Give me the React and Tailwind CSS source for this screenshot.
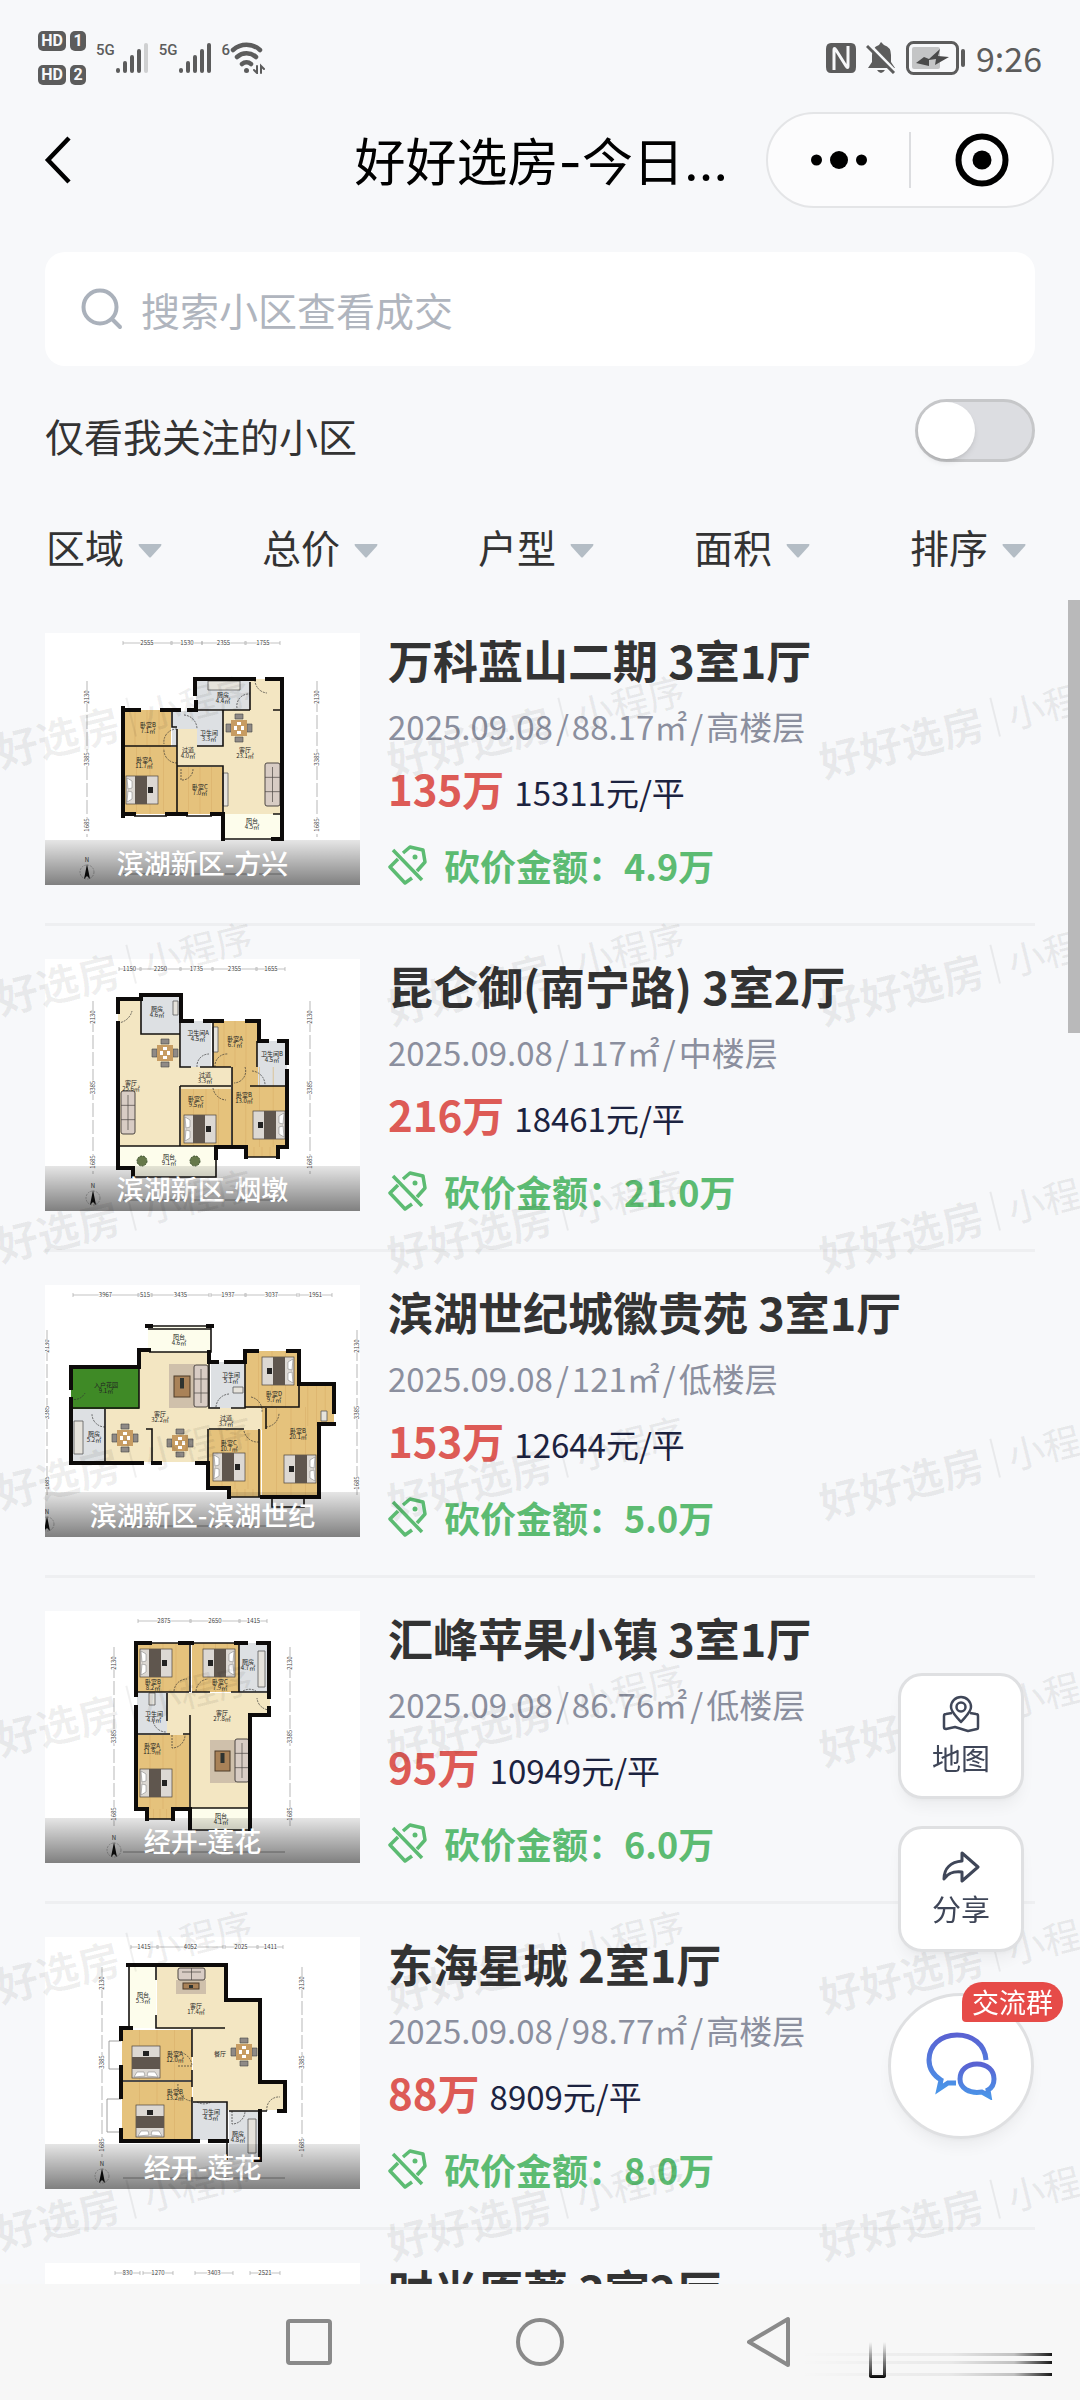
import { useState } from 'react';

const filters = ['区域', '总价', '户型', '面积', '排序'];

// x, y, w, h, floor
const plans = {
  fangxing: {
    rooms: [
      [151, 46, 54, 31, 'tile'], [205, 46, 32, 32, 'hall'], [178, 77, 59, 104, 'hall'],
      [127, 78, 51, 35, 'tile'], [132, 96, 20, 38, 'hall'], [132, 113, 46, 21, 'hall'],
      [78, 77, 48, 37, 'wood'], [78, 114, 54, 67, 'wood'], [132, 134, 46, 47, 'wood'], [177, 181, 60, 25, 'sun'],
    ],
    walls: 'M150 61V46H209 M222 46H237V206H228 M151 69V77H144 M78 77H94 M117 77H134 M78 75V183 M78 181H89 M122 181H141 M167 181H178V206',
    thin: 'M205 49V77 M127 77V94H132 M178 77V113H152 M78 113H132 M132 96V181 M132 133H178V181 M151 77H205 M228 77H237 M228 181H237 M178 206H237 M89 183H122 M141 183H167',
    doors: 'M210 47a13 13 0 0 0 12 13 M139 82a14 14 0 0 1 13 14 M132 96a13 13 0 0 0-13 15 M132 130a13 13 0 0 1-13-14 M136 136v11a11 11 0 0 0 12-11 M192 75a12 12 0 0 1 13-14',
    beds: [[81, 143, 0]],
    tables: [[194, 95]],
    sofas: [[220, 130, 15, 43]],
    extras: 'M178 140h5v33h-5z M163 48h32v9h-32z',
    labels: [[178, 64, '厨房', '4.4㎡'], [103, 94, '卧室B', '7.1㎡'], [99, 129, '卧室A', '11.7㎡'], [164, 102, '卫生间', '3.3㎡'], [143, 119, '过道', '4.0㎡'], [200, 119, '客厅', '23.1㎡'], [155, 156, '卧室C', '7.0㎡'], [207, 190, '阳台', '4.5㎡']],
    top: [[78, 126, '2555'], [127, 157, '1530'], [157, 200, '2355'], [201, 235, '1755']],
    left: 42, right: 272, from: 48, to: 204,
  },
  yandun: {
    rooms: [
      [73, 40, 62, 147, 'hall'], [96, 37, 39, 38, 'tile'], [136, 62, 30, 46, 'tile'], [168, 62, 44, 46, 'wood'],
      [135, 108, 51, 22, 'hall'], [136, 130, 50, 57, 'wood'], [187, 108, 55, 80, 'wood'], [201, 188, 32, 10, 'wood'],
      [213, 82, 29, 45, 'tile'], [73, 187, 98, 22, 'sun'], [88, 209, 83, 8, 'sun'],
    ],
    walls: 'M73 53V40H96V36H136V62H147 M73 64V209H88V217 M160 62H177 M202 62H214V82H222 M234 82H242V104 M242 112V188H233V198 M171 199V188H201V198',
    thin: 'M96 37V75H135 M135 62V108H146 M155 108H186 M168 62V108 M212 82V108 M205 127H242 M135 127H186 M135 127V187 M187 108V187 M88 218H171V188 M73 187H171 M201 198H233',
    doors: 'M73 64a16 16 0 0 0 14-12 M152 108a12 12 0 0 1 12-13 M170 108a12 12 0 0 1 13-13 M168 129a14 14 0 0 0 13 12 M207 112a14 14 0 0 1 13 14 M200 108a12 12 0 0 1-11 16',
    beds: [[139, 156, 0], [208, 152, 180]],
    tables: [[120, 94]],
    sofas: [[76, 132, 14, 43]],
    extras: 'M168 68h5v25h-5z M128 42h5v14h-5z',
    plants: [[97, 202], [150, 202]],
    labels: [[112, 52, '厨房', '4.6㎡'], [153, 76, '卫生间A', '4.5㎡'], [190, 82, '卧室A', '6.7㎡'], [227, 97, '卫生间B', '4.5㎡'], [160, 118, '过道', '3.3㎡'], [86, 126, '客厅', '25.6㎡'], [151, 142, '卧室C', '9.5㎡'], [199, 138, '卧室B', '13.0㎡'], [124, 200, '阳台', '9.1㎡']],
    top: [[74, 95, '1150'], [96, 135, '2250'], [136, 167, '1735'], [168, 211, '2355'], [212, 240, '1655']],
    left: 48, right: 265, from: 42, to: 215,
  },
  shiji: {
    rooms: [
      [103, 41, 63, 26, 'sun'], [26, 82, 68, 42, 'grass'], [26, 124, 34, 53, 'tile'], [94, 67, 70, 58, 'hall'],
      [61, 124, 103, 53, 'hall'], [166, 77, 34, 47, 'tile'], [200, 66, 54, 57, 'wood'], [164, 123, 57, 22, 'hall'],
      [164, 145, 52, 59, 'wood'], [184, 204, 32, 8, 'wood'], [217, 122, 58, 90, 'wood'], [254, 99, 35, 42, 'wood'], [227, 212, 32, 10, 'plain'],
    ],
    walls: 'M102 41h4 M163 41h4 M26 103V82H94V65H104 M26 114V178H97 M108 178H115 M152 178H163V203H184V212 M164 67V77H172 M181 77H200V66H212 M243 66H254V99H289V127 M289 139H274V212H217',
    thin: 'M103 41H166V67H104 M103 44H166 M94 67V123H26 M60 124V177 M101 144H107V177 M164 67V123H175 M186 123H200V77 M200 122H254V99 M221 123V144 M164 144H199 M214 144V212 M163 144V177 M184 212H216 M227 212V222H259V212',
    doors: 'M26 114a12 12 0 0 0 14-6 M60 142a13 13 0 0 1-13-13 M171 122a14 14 0 0 1 13-13 M206 112a14 14 0 0 1 11 15 M199 146a14 14 0 0 0 15 11 M221 142a14 14 0 0 0 13-14',
    beds: [[217, 72, 180], [168, 168, 0], [239, 170, 180]],
    tables: [[80, 153], [135, 158]],
    sofas: [[149, 80, 14, 42]],
    rugs: [[124, 79, 26, 44, 129, 91, 16, 21]],
    extras: 'M29 136h9v33h-9z M188 102h10v6h-10z M276 126h6v10h-6z',
    labels: [[134, 54, '阳台', '4.6㎡'], [61, 102, '入户花园', '9.1㎡'], [186, 92, '卫生间', '5.1㎡'], [229, 111, '卧室D', '9.7㎡'], [115, 131, '客厅', '32.2㎡'], [181, 135, '过道', '3.7㎡'], [49, 151, '厨房', '5.2㎡'], [253, 148, '卧室B', '20.1㎡'], [184, 160, '卧室C', '10.7㎡']],
    top: [[28, 93, '3967'], [94, 106, '515'], [107, 164, '3435'], [166, 200, '1937'], [201, 252, '3037'], [254, 287, '1951']],
    left: 2, right: 312, from: 45, to: 210,
  },
  lianhuaA: {
    rooms: [
      [92, 32, 52, 49, 'wood'], [147, 32, 47, 49, 'wood'], [195, 32, 29, 49, 'tile'], [122, 82, 83, 115, 'hall'],
      [205, 82, 20, 22, 'hall'], [92, 82, 30, 42, 'tile'], [92, 124, 52, 74, 'wood'], [102, 198, 26, 10, 'wood'], [147, 197, 58, 22, 'sun'],
    ],
    walls: 'M105 32H91V84 M91 96V198H102V208 M135 32H147 M191 32H201 M213 32H224V86 M224 97V104H205V219 M128 208V198H145V219',
    thin: 'M145 32V81 M194 32V81 M92 81H144 M147 81H165 M186 81H224 M122 82V110 M92 123H125 M138 123H145 M145 104V198 M145 197H205 M147 219H205 M102 208H128 M105 32H135 M147 32H191',
    doors: 'M129 80a13 13 0 0 1 13-12 M151 80a13 13 0 0 1 12-12 M198 80a13 13 0 0 1 13 0 M225 99a13 13 0 0 1-13-12 M108 108a13 13 0 0 0 13 13 M127 124v13a13 13 0 0 0 13-13',
    beds: [[95, 38, 0], [158, 38, 180], [95, 158, 0]],
    tables: [],
    sofas: [[190, 128, 14, 43]],
    rugs: [[165, 129, 26, 43, 170, 140, 15, 20]],
    extras: 'M213 40h7v36h-7z M104 82h6v12h-6z',
    labels: [[108, 73, '卧室B', '8.2㎡'], [175, 73, '卧室C', '7.9㎡'], [203, 53, '厨房', '4.7㎡'], [109, 105, '卫生间', '4.0㎡'], [177, 104, '客厅', '27.8㎡'], [107, 137, '卧室A', '11.9㎡'], [176, 207, '阳台', '4.1㎡']],
    top: [[93, 145, '2875'], [146, 194, '2650'], [195, 222, '1415']],
    left: 69, right: 245, from: 36, to: 215,
  },
  lianhuaB: {
    rooms: [
      [84, 30, 27, 61, 'sun'], [112, 28, 69, 64, 'hall'], [148, 63, 67, 110, 'hall'], [215, 145, 25, 28, 'hall'],
      [77, 93, 70, 50, 'wood'], [77, 145, 70, 58, 'wood'], [148, 165, 34, 38, 'tile'], [184, 174, 31, 49, 'tile'],
    ],
    walls: 'M83 28H181V63H215V145H240V174H234 M86 91H76V102 M76 130V160 M76 193V204H153 M165 204H182 M215 174V223H208',
    thin: 'M84 30V91 M111 30V43 M111 78V91H180 M147 92V120 M147 133V150 M77 144H147 M147 160V203 M148 165H182V203 M184 174H222 M182 203V223',
    lines: 'M76 104H64V132H76 M76 162H62V195H76',
    doors: 'M133 129h14a15 15 0 0 0-13-14 M133 147a15 15 0 0 0 14 17 M152 165a14 14 0 0 0 14 0 M187 174v13a13 13 0 0 0 13-13 M222 174a12 12 0 0 1 13-14',
    beds: [[85, 111, 270], [89, 170, 270]],
    tables: [[199, 115]],
    sofas: [[133, 31, 27, 12]],
    rugs: [[131, 43, 30, 14, 138, 46, 16, 6]],
    extras: 'M203 182h8v34h-8z',
    labels: [[98, 60, '阳台', '5.3㎡'], [151, 71, '客厅', '17.4㎡'], [175, 119, '餐厅', ''], [130, 119, '卧室A', '12.0㎡'], [130, 157, '卧室B', '13.2㎡'], [166, 177, '卫生间', '4.5㎡'], [193, 199, '厨房', '4.8㎡']],
    top: [[86, 112, '1415'], [113, 178, '4052'], [180, 212, '2025'], [213, 238, '1411']],
    left: 57, right: 257, from: 30, to: 220,
  },
  empty: {
    rooms: [], walls: '', thin: '', doors: '', beds: [], tables: [], sofas: [], extras: '', labels: [],
    top: [[70, 95, '830'], [98, 128, '1270'], [150, 188, '3403'], [205, 235, '2521']],
    left: 60, right: 250, from: 36, to: 215,
  },
};

const floors = { tile: '#dde0e3', hall: '#f3e6c2', wood: '#e5c27c', sun: '#fdfdec', grass: '#3f8a26', plain: '#ffffff' };

const listings = [
  { name: '万科蓝山二期', layout: '3室1厅', size: '88.17', floor: '高楼层', price: '135', unit: '15311', cut: '4.9', area: '滨湖新区-方兴', plan: 'fangxing' },
  { name: '昆仑御(南宁路)', layout: '3室2厅', size: '117', floor: '中楼层', price: '216', unit: '18461', cut: '21.0', area: '滨湖新区-烟墩', plan: 'yandun' },
  { name: '滨湖世纪城徽贵苑', layout: '3室1厅', size: '121', floor: '低楼层', price: '153', unit: '12644', cut: '5.0', area: '滨湖新区-滨湖世纪', plan: 'shiji' },
  { name: '汇峰苹果小镇', layout: '3室1厅', size: '86.76', floor: '低楼层', price: '95', unit: '10949', cut: '6.0', area: '经开-莲花', plan: 'lianhuaA' },
  { name: '东海星城', layout: '2室1厅', size: '98.77', floor: '高楼层', price: '88', unit: '8909', cut: '8.0', area: '经开-莲花', plan: 'lianhuaB' },
  { name: '时光原著', layout: '3室2厅', size: '95.2', floor: '中楼层', price: '120', unit: '12605', cut: '5.0', area: '经开-莲花', plan: 'empty' },
];

function Bed({ x, y, turn }) {
  return (
    <g transform={`translate(${x} ${y}) rotate(${turn} 16 14)`}>
      <rect width="32" height="28" fill="#dcd8d3" stroke="#4b443d" strokeWidth="0.7" />
      <path d="M1 2l5 3v7l-4 1zM1 26l5-3v-7l-4-1z" fill="#fff" stroke="#777" strokeWidth="0.5" />
      <rect x="9" width="12" height="28" fill="#5f564e" />
      <rect x="22" y="11" width="5" height="6" fill="#222" />
    </g>
  );
}

function Table({ x, y }) {
  return (
    <g transform={`translate(${x} ${y})`}>
      <path d="M-4-14h8v5h-8zM-4 9h8v5h-8zM-13-4h5v8h-5zM8-4h5v8h-5z" fill="#8f8a86" stroke="#444" strokeWidth="0.6" />
      <rect x="-8" y="-8" width="16" height="16" fill="#c79c62" />
      <path d="M-5-2h3v4h-3zM2-2h3v4H2zM-2-6h4v3h-4zM-2 3h4v3h-4z" fill="#fff" />
    </g>
  );
}

function Dim({ x, y, turn, text }) {
  return <text x={x} y={y} transform={turn ? `rotate(-90 ${x} ${y})` : undefined} textAnchor="middle" fontSize="6" fill="#444" stroke="#fff" strokeWidth="1.5" paintOrder="stroke">{text}</text>;
}

function FloorPlan({ plan }) {
  const mid = (plan.from + plan.to) / 2;
  return (
    <svg viewBox="0 0 315 252" className="block w-full h-full" aria-hidden="true">
      {plan.rooms.map(([x, y, w, h, kind], i) => (
        <rect key={i} x={x} y={y} width={w} height={h} fill={floors[kind]} />
      ))}
      {plan.rooms.filter(r => r[4] === 'wood').map(([x, y, w, h], i) => (
        <path key={i} d={`M${x + w * 0.25} ${y}v${h}M${x + w * 0.5} ${y}v${h}M${x + w * 0.75} ${y}v${h}`} stroke="#d8b06a" strokeWidth="0.6" />
      ))}
      {plan.rugs?.map(([x, y, w, h, tx, ty, tw, th], i) => (
        <g key={i}>
          <rect x={x} y={y} width={w} height={h} fill="#cfc0ab" />
          <rect x={tx} y={ty} width={tw} height={th} fill="#a98258" stroke="#4d3a28" strokeWidth="1" />
          <rect x={tx + tw / 2 - 2} y={ty + 2} width="4" height={th / 2} fill="#2e3330" />
        </g>
      ))}
      {plan.sofas.map(([x, y, w, h], i) => (
        <g key={i} stroke="#4c4643" strokeWidth="1">
          <rect x={x} y={y} width={w} height={h} rx="2" fill="#d8ccc4" />
          <path d={w > h ? `M${x + 4} ${y + 4}h${w - 8}M${x + w / 2} ${y}v${h}` : `M${x + w / 2} ${y + 4}v${h - 8}M${x} ${y + h / 3}h${w}M${x} ${y + (h * 2) / 3}h${w}`} fill="none" strokeWidth="0.7" />
        </g>
      ))}
      <path d={plan.extras} fill="#e6e3dc" stroke="#5a5a5a" strokeWidth="0.8" />
      {plan.beds.map(([x, y, turn], i) => <Bed key={i} x={x} y={y} turn={turn} />)}
      {plan.tables.map(([x, y], i) => <Table key={i} x={x} y={y} />)}
      {plan.plants?.map(([x, y], i) => <circle key={i} cx={x} cy={y} r="5" fill="#66784a" stroke="#3e5230" strokeDasharray="2 1" />)}
      <path d={plan.doors} fill="none" stroke="#333" strokeWidth="0.7" strokeDasharray="2 1" />
      <path d={plan.lines} fill="none" stroke="#888" strokeWidth="0.8" />
      <path d={plan.thin} fill="none" stroke="#15120f" strokeWidth="1.6" />
      <path d={plan.walls} fill="none" stroke="#0d0b0a" strokeWidth="4" strokeLinecap="square" />
      {plan.labels.map(([x, y, name, size], i) => (
        <text key={i} x={x} y={y} textAnchor="middle" fontSize="6" fill="#222">
          {name}
          <tspan x={x} dy="6">{size}</tspan>
        </text>
      ))}
      {plan.top.map(([a, b, text]) => (
        <g key={a}>
          <path d={`M${a} 10H${b}M${a} 8v4M${b} 8v4`} stroke="#aaa" strokeWidth="0.7" />
          <Dim x={(a + b) / 2} y={12} text={text} />
        </g>
      ))}
      {[plan.left, plan.right].map(x => (
        <g key={x}>
          <path d={`M${x} ${plan.from}V${plan.to}`} stroke="#999" strokeWidth="0.7" strokeDasharray="14 3" />
          <Dim x={x + 2} y={plan.from + 16} turn text="2130" />
          <Dim x={x + 2} y={mid} turn text="3385" />
          <Dim x={x + 2} y={plan.to - 12} turn text="1685" />
        </g>
      ))}
      <path d="M78 241H240" stroke="#777" strokeWidth="0.7" strokeDasharray="30 4" />
      <circle cx={plan.left} cy="239" r="7" fill="none" stroke="#999" strokeWidth="0.6" strokeDasharray="2 1" />
      <path d={`M${plan.left} 231l3 15-3-3-3 3z`} fill="#111" />
      <text x={plan.left} y="229" textAnchor="middle" fontSize="6" fill="#333">N</text>
    </svg>
  );
}

function HdBadge({ n }) {
  return (
    <div className="flex gap-1 font-['Roboto',sans-serif] text-base leading-5 font-bold text-[#f7f8fa]">
      <span className="w-7 rounded-[5px] bg-[#5c5c5c] text-center">HD</span>
      <span className="w-4 rounded-[5px] bg-[#5c5c5c] text-center">{n}</span>
    </div>
  );
}

function Signal({ weak }) {
  return (
    <div className="flex">
      <span className="font-['Roboto',sans-serif] text-[15px] leading-4 font-medium">5G</span>
      <svg width="34" height="32" viewBox="0 0 34 32" stroke="currentColor" strokeWidth="4" strokeLinecap="round">
        <path d="M3 28v1M10 21v8M17 15v14M24 9v20" />
        <path d="M31 3v26" opacity={weak ? 0.25 : 1} />
      </svg>
    </div>
  );
}

function StatusBar() {
  return (
    <div className="flex h-28 items-center justify-between px-[38px] pt-1 text-[#5c5c5c]">
      <div className="flex items-center gap-2.5">
        <div className="flex flex-col gap-3.5">
          <HdBadge n="1" />
          <HdBadge n="2" />
        </div>
        <Signal weak />
        <Signal />
        <div className="flex">
          <span className="font-['Roboto',sans-serif] text-[15px] leading-4 font-medium">6</span>
          <svg width="36" height="32" viewBox="0 0 36 32" fill="none" stroke="currentColor" strokeWidth="4.500" strokeLinecap="round">
            <path d="M3 8a20 20 0 0 1 27 0M7 15a14 14 0 0 1 19 0M12 22a7 7 0 0 1 9 0" />
            <circle cx="16.500" cy="28.500" r="2.500" fill="currentColor" stroke="none" />
            <path d="M27 24v7l-3-3M31 31v-7l3 3" strokeWidth="2" />
          </svg>
        </div>
      </div>
      <div className="flex items-center gap-2.5">
        <svg width="30" height="32" viewBox="0 0 30 32">
          <path d="M5 1h20q5 0 5 6v18q0 6-5 6H5q-5 0-5-6V7q0-6 5-6z" fill="currentColor" />
          <path d="M8 28V8q0-3 2 0l10 16q2 3 2 0V4" fill="none" stroke="#f7f8fa" strokeWidth="3" />
        </svg>
        <svg width="30" height="32" viewBox="0 0 30 32">
          <path d="M15 0l3 3q7 2 7 10v7l4 6H2l4-6v-7q0-8 7-10z" fill="currentColor" />
          <path d="M11 28h8q-4 6-8 0z" fill="currentColor" />
          <path d="M2 1l28 29" stroke="#f7f8fa" strokeWidth="3" />
          <path d="M1 4l27 27" stroke="currentColor" strokeWidth="3" />
        </svg>
        <svg width="60" height="34" viewBox="0 0 60 34">
          <rect x="1.500" y="1.500" width="50" height="31" rx="6" fill="none" stroke="currentColor" strokeWidth="3" />
          <rect x="6" y="6" width="28" height="22" rx="2" fill="#c4c5c6" />
          <path d="M34 8l-2 7 11 1-14 8 1-6-7 1 0 6-13-3 8-6 5 2z" fill="#4a4a4a" />
          <path d="M57 10v14" stroke="currentColor" strokeWidth="4" strokeLinecap="round" />
        </svg>
        <span className="text-[34px] leading-10">9:26</span>
      </div>
    </div>
  );
}

function TitleBar() {
  return (
    <div className="flex h-24 items-center pr-[26px] pl-10 text-black">
      <button aria-label="返回" className="flex-1">
        <svg width="36" height="48" viewBox="0 0 36 48" fill="none" stroke="currentColor" strokeWidth="4.500">
          <path d="M29 2L8 24l21 22" />
        </svg>
      </button>
      <h1 className="mr-[38px] pt-1.5 font-['Inter','Noto_Sans_CJK_SC',sans-serif] text-[51px] leading-[60px]">好好选房-今日…</h1>
      <div className="flex h-24 w-[288px] items-center rounded-full border-2 border-[#e4e5e7] bg-[#fcfcfd]">
        <button aria-label="更多" className="flex flex-1 justify-center">
          <svg width="56" height="20" viewBox="0 0 56 20">
            <circle cx="5.500" cy="10" r="5.500" />
            <circle cx="28" cy="10" r="9" />
            <circle cx="50.500" cy="10" r="5.500" />
          </svg>
        </button>
        <span className="h-14 w-0.5 bg-[#dcdde0]"></span>
        <button aria-label="关闭" className="flex flex-1 justify-center">
          <svg width="54" height="54" viewBox="0 0 54 54">
            <circle cx="27" cy="27" r="23.500" fill="none" stroke="currentColor" strokeWidth="6" />
            <circle cx="27" cy="27" r="9.500" />
          </svg>
        </button>
      </div>
    </div>
  );
}

function Listing({ item }) {
  return (
    <li className="flex gap-7 border-b-[3px] border-[#eeeff1] pt-[33px] pb-[38px]">
      <div className="relative h-[252px] w-[315px] shrink-0 bg-white">
        <FloorPlan plan={plans[item.plan]} />
        <span className="absolute inset-x-0 bottom-0 bg-linear-to-b from-black/10 to-black/50 text-center text-[27px] leading-[45px] font-medium text-white">{item.area}</span>
      </div>
      <div className="flex-1 whitespace-nowrap">
        <h2 className="text-[45px] leading-[54px] font-bold text-[#333]">{item.name} {item.layout}</h2>
        <p className="mt-[17px] flex gap-[3px] text-[33px] leading-11 text-[#8b8f9e]">
          <span>2025.09.08</span><span>/</span><span>{item.size}㎡</span><span>/</span><span>{item.floor}</span>
        </p>
        <p className="mt-3 flex h-[60px] items-baseline gap-2.5 leading-14">
          <strong className="text-[42px] font-bold text-[#dd5b56]">{item.price}万</strong>
          <span className="text-[33px] text-[#1c2340]">{item.unit}元/平</span>
        </p>
        <p className="mt-[25px] flex items-center gap-4 text-[36px] leading-10 font-bold text-[#5cbb72]">
          <svg width="40" height="40" viewBox="0 0 40 40" fill="none" stroke="currentColor" strokeWidth="3.500" strokeLinejoin="round">
            <path d="M5 5l29 30M10 14l-8 8 15 16 7-5M15 8l7-6 13 3 2 12-8 9" />
            <circle cx="27" cy="12" r="2.500" fill="currentColor" stroke="none" />
          </svg>
          <span>砍价金额：{item.cut}万</span>
        </p>
      </div>
    </li>
  );
}

function Watermark() {
  return (
    <div aria-hidden="true" className="pointer-events-none absolute inset-0 overflow-hidden">
      <div className="-ml-[112px] grid auto-rows-[247px] grid-cols-[432px_432px_432px]">
        {Array.from({ length: 21 }, (_, i) => (
          <div key={i} className="flex items-center justify-center">
            <div className="flex -rotate-[14deg] items-center gap-3 whitespace-nowrap text-black/6">
              <span className="text-[42px] leading-12 font-bold">好好选房</span>
              <span className="h-10 w-0.5 bg-black/6"></span>
              <span className="text-[37px] leading-12 font-medium">小程序</span>
            </div>
          </div>
        ))}
      </div>
    </div>
  );
}

function FloatingTools() {
  const card = 'flex h-[126px] w-[126px] flex-col items-center justify-center gap-1 rounded-3xl border-[3px] border-[#dfe0e2] bg-white text-[29px] leading-10 text-[#3f4658] shadow-lg shadow-black/5';
  return (
    <div className="fixed right-[46px] bottom-[261px] flex flex-col items-center gap-[27px]">
      <button className={card}>
        <svg width="38" height="38" viewBox="0 0 38 38" fill="none" stroke="currentColor" strokeWidth="2.500" strokeLinejoin="round">
          <path d="M19 27c-5-6-10-10-10-15a10 10 0 0 1 20 0c0 5-5 9-10 15z" />
          <circle cx="19" cy="12" r="4.500" />
          <path d="M10 18l-6 1q-2 0-2 2v11q0 2 2 2l9-2 13 4 9-2q1 0 1-2V21q0-2-2-2l-6-1" />
        </svg>
        地图
      </button>
      <button className={card}>
        <svg width="38" height="34" viewBox="0 0 38 34" fill="none" stroke="currentColor" strokeWidth="3" strokeLinejoin="round">
          <path d="M20 3l16 14-16 14v-9C11 21 6 23 2 29 2 18 9 12 20 11z" />
        </svg>
        分享
      </button>
      <button aria-label="交流群" className="relative mt-3.5 flex h-[146px] w-[146px] items-center justify-center rounded-full border-[3px] border-[#dfe0e2] bg-white shadow-lg shadow-black/5">
        <svg width="72" height="68" viewBox="0 0 72 68" fill="none" stroke="url(#chat)" strokeWidth="5">
          <defs>
            <linearGradient id="chat" x1="0" y1="0" x2="0" y2="1">
              <stop offset="0" stopColor="#5a62d2" />
              <stop offset="1" stopColor="#4a94e8" />
            </linearGradient>
          </defs>
          <path d="M61 28C60 12 47 3 32 3 15 3 4 14 4 28c0 8 4 15 12 20l-2 9 9-6 8 0" />
          <path d="M52 32c10 0 17 6 17 15 0 5-2 9-6 11l1 6-7-4c-13 2-22-4-22-13 0-9 7-15 17-15z" />
        </svg>
        <span className="absolute -top-3.5 -right-8 rounded-[20px] rounded-bl-sm bg-[#e64b48] px-2.5 text-[27px] leading-10 text-white">交流群</span>
      </button>
    </div>
  );
}

function SystemNav() {
  return (
    <nav className="relative flex h-[116px] shrink-0 items-center justify-center gap-[183px] bg-[#f7f7f7] text-[#8a8a8a]">
      <button aria-label="最近任务">
        <svg width="48" height="52" viewBox="0 0 48 52" fill="none" stroke="currentColor" strokeWidth="4">
          <rect x="3" y="5" width="42" height="42" rx="2" />
        </svg>
      </button>
      <button aria-label="主页">
        <svg width="48" height="52" viewBox="0 0 48 52" fill="none" stroke="currentColor" strokeWidth="4">
          <circle cx="24" cy="26" r="22" />
        </svg>
      </button>
      <button aria-label="返回上一级">
        <svg width="48" height="52" viewBox="0 0 48 52" fill="none" stroke="currentColor" strokeWidth="4" strokeLinejoin="round">
          <path d="M41 3v46L2 26z" />
        </svg>
      </button>
      <svg width="260" height="40" viewBox="0 0 260 40" className="absolute right-6 bottom-5" aria-hidden="true">
        <defs>
          <linearGradient id="streak" x1="0" x2="1">
            <stop offset="0" stopOpacity="0" />
            <stop offset="0.6" stopOpacity="0.06" />
            <stop offset="0.85" stopOpacity="0.22" />
            <stop offset="1" stopOpacity="0.9" />
          </linearGradient>
          <linearGradient id="drop" x1="0" y1="0" x2="0" y2="1">
            <stop offset="0" stopOpacity="0" />
            <stop offset="0.9" stopOpacity="0.8" />
            <stop offset="1" />
          </linearGradient>
        </defs>
        <path d="M4 13h252v3H4zM4 21h252v3H4zM4 33h252v3H4z" fill="url(#streak)" />
        <path d="M73 2h3v33h11V2h3v34q0 2-3 2H76q-3 0-3-2z" fill="url(#drop)" />
      </svg>
    </nav>
  );
}

export default function App() {
  const [followed, setFollowed] = useState(false);
  const [keyword, setKeyword] = useState('');

  return (
    <div className="flex h-screen flex-col bg-[#f7f8fa] font-['Noto_Sans_CJK_SC',sans-serif]">
      <header className="shrink-0">
        <StatusBar />
        <TitleBar />
        <label className="mx-[45px] mt-11 flex h-[114px] items-center gap-[18px] rounded-[20px] bg-white px-9">
          <svg width="42" height="42" viewBox="0 0 42 42" fill="none" stroke="#aab1bb" strokeWidth="4" strokeLinecap="round" className="shrink-0">
            <circle cx="19" cy="19" r="16.500" />
            <path d="M32 32l7 7" />
          </svg>
          <input type="text" value={keyword} onChange={e => setKeyword(e.target.value)} aria-label="搜索小区" placeholder="搜索小区查看成交" className="w-full bg-transparent text-[39px] leading-[56px] outline-none placeholder:text-[#b0b5be]" />
        </label>
        <div className="flex items-start justify-between px-[45px] pt-[33px] text-[39px] leading-[72px] text-[#333]">
          <label htmlFor="followed">仅看我关注的小区</label>
          <input id="followed" type="checkbox" role="switch" checked={followed} onChange={e => setFollowed(e.target.checked)} className="flex h-[63px] w-[120px] appearance-none rounded-full border-[3px] border-[#c6c7c9] bg-[#dcdde1] before:h-[57px] before:w-[57px] before:rounded-full before:bg-white before:shadow-md checked:justify-end checked:bg-[#5cbb72]" />
        </div>
        <div className="grid h-[129px] grid-cols-5 pt-5">
          {filters.map(name => (
            <button key={name} className="flex items-center gap-3.5 pl-[46px] text-[39px] leading-[56px] text-[#333]">
              {name}
              <svg width="24" height="14" viewBox="0 0 24 14" className="mt-2.5">
                <path d="M1 0h22q1 0 0 2L13 13q-1 1-2 0L1 2q-1-2 0-2z" fill="#b4bdc5" />
              </svg>
            </button>
          ))}
        </div>
      </header>
      <main className="relative min-h-0 flex-1 overflow-hidden">
        <ul className="mx-[45px]">
          {listings.map(item => <Listing key={item.name} item={item} />)}
        </ul>
        <Watermark />
        <div className="absolute top-0 right-0 h-[433px] w-3 bg-[#b9b9ba]"></div>
      </main>
      <SystemNav />
      <FloatingTools />
    </div>
  );
}
